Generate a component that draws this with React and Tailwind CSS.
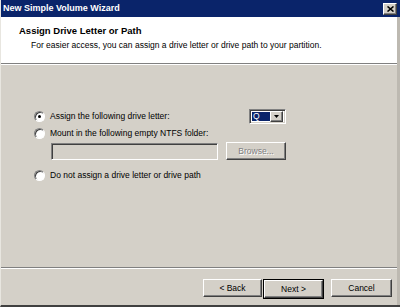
const raised = 'border border-t-white border-l-white border-b-[#404040] border-r-[#404040] shadow-[inset_-1px_-1px_#808080]';
const sunken = 'border border-t-[#808080] border-l-[#808080] border-b-white border-r-white shadow-[inset_1px_1px_#404040,inset_-1px_-1px_#d4d0c8]';

const Radio = ({ checked }) => (
  <span className="relative w-[11px] h-[11px] shrink-0 rounded-full bg-white border border-t-[#808080] border-l-[#808080] border-b-white border-r-white shadow-[inset_1px_1px_#404040]">
    {checked && <span className="absolute left-[3px] top-[3px] w-[3px] h-[3px] rounded-full bg-black" />}
  </span>
);

const Button = ({ children, className = '', disabled }) => (
  <div className={`h-[18px] flex items-center justify-center bg-[#d4d0c8] ${raised} ${className}`}>
    <span className={disabled ? 'text-[#808080] [text-shadow:1px_1px_#fff]' : 'text-black'}>{children}</span>
  </div>
);

const App = () => {
  return (
    <div
      className="w-[400px] h-[307px] flex flex-col bg-[#d4d0c8] border-l border-l-[#e8e6e0] border-b-2 border-b-[#404040] text-[8.5px] text-black overflow-hidden"
      style={{ fontFamily: '"Liberation Sans", Arial, sans-serif' }}
    >
      {/* title bar */}
      <div className="h-[17px] shrink-0 flex items-center justify-between bg-[#0a246a] pl-[2px] pr-[3px]">
        <span className="text-white font-bold text-[9px]">New Simple Volume Wizard</span>
        <div className={`w-[14px] h-[12px] flex items-center justify-center bg-[#d4d0c8] ${raised}`}>
          <svg width="7" height="6" viewBox="0 0 7 6">
            <path d="M0.5 0.5 L6.5 5.5 M6.5 0.5 L0.5 5.5" stroke="#000" strokeWidth="1.6" />
          </svg>
        </div>
      </div>

      <div className="flex-1 flex flex-col border-r-[3px] border-r-[#bdb9b1]">
        {/* header */}
        <div className="h-[46px] shrink-0 bg-white pl-[18px] pt-[8px] flex flex-col">
          <span className="font-bold text-[9.5px] leading-[12px]">Assign Drive Letter or Path</span>
          <span className="pl-[12px] mt-[3px] leading-[11px]">
            For easier access, you can assign a drive letter or drive path to your partition.
          </span>
        </div>
        <div className="h-[2px] shrink-0 border-t border-t-[#808080] border-b border-b-white" />

        {/* body */}
        <div className="flex-1 flex flex-col pl-[33px] pt-[44px]">
          <div className="w-[252px] h-[15px] flex items-center justify-between">
            <div className="flex items-center gap-[5px]">
              <Radio checked />
              <span>Assign the following drive letter:</span>
            </div>
            <div className={`w-[37px] h-[15px] flex items-center bg-white p-[2px] ${sunken}`}>
              <div className="flex-1 h-full bg-[#0a246a] text-white flex items-center pl-[1px] leading-none">Q</div>
              <div className={`w-[13px] h-[11px] flex items-center justify-center bg-[#d4d0c8] ${raised}`}>
                <svg width="5" height="3" viewBox="0 0 5 3">
                  <path d="M0 0 H5 L2.5 3 Z" fill="#000" />
                </svg>
              </div>
            </div>
          </div>

          <div className="h-[13px] mt-[3px] flex items-center gap-[5px]">
            <Radio />
            <span>Mount in the following empty NTFS folder:</span>
          </div>

          <div className="flex items-center gap-[8px] pl-[17px] mt-[2px]">
            <div className={`w-[167px] h-[17px] bg-[#d4d0c8] ${sunken}`} />
            <Button disabled className="w-[60px]">Browse...</Button>
          </div>

          <div className="h-[13px] mt-[9px] flex items-center gap-[5px]">
            <Radio />
            <span>Do not assign a drive letter or drive path</span>
          </div>
        </div>

        {/* footer */}
        <div className="h-[2px] shrink-0 border-t border-t-[#808080] border-b border-b-white" />
        <div className="h-[36px] shrink-0 flex items-start justify-end pt-[10px] pr-[5px]">
          <Button className="w-[59px]">&lt; Back</Button>
          <div className="ml-[1px] border border-black">
            <Button className="w-[59px] h-[16px]">Next &gt;</Button>
          </div>
          <Button className="w-[61px] ml-[7px]">Cancel</Button>
        </div>
      </div>
    </div>
  );
};

export default App;
